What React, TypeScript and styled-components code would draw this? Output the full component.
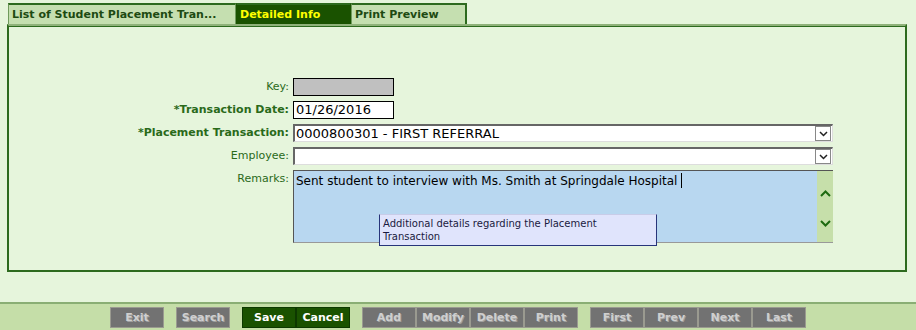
import React from "react";
import styled, { createGlobalStyle } from "styled-components";

const GlobalStyle = createGlobalStyle`
  html, body {
    margin: 0;
    padding: 0;
    background: #e6f5dc;
    font-family: "DejaVu Sans", Verdana, sans-serif;
  }
`;

const Page = styled.div`
  width: 916px;
  height: 330px;
  display: flex;
  flex-direction: column;
  overflow: hidden;
  background: #e6f5dc;
`;

const Tabs = styled.div`
  display: flex;
  padding: 3px 0 0 8px;
`;

const Tab = styled.div<{ $active?: boolean; $width: number }>`
  width: ${(p) => p.$width}px;
  height: 19px;
  box-sizing: content-box;
  border: 1px solid ${(p) => (p.$active ? "#1a5200" : "#6f9a5c")};
  border-top: 2px solid #2d6a1e;
  border-bottom: none;
  background: ${(p) => (p.$active ? "#1a5200" : "#c5dfb0")};
  color: ${(p) => (p.$active ? "#ffff00" : "#1d4a12")};
  font-size: 11px;
  font-weight: bold;
  line-height: 19px;
  padding-left: 3px;
  white-space: nowrap;
  overflow: hidden;
  &:last-child {
    border-right: 2px solid #2d6a1e;
  }
`;

const Panel = styled.div`
  margin: 0 9px 0 7px;
  height: 244px;
  border: 2px solid #2d6a1e;
  border-top: 2px solid #8fb27a;
  box-shadow: inset 0 1px 0 #2d6a1e;
  position: relative;
`;

const Form = styled.div`
  display: grid;
  grid-template-columns: 280px 540px;
  column-gap: 4px;
  row-gap: 5px;
  padding-top: 52px;
  align-items: start;
`;

const Label = styled.div<{ $required?: boolean }>`
  text-align: right;
  font-size: 11px;
  font-weight: ${(p) => (p.$required ? "bold" : "normal")};
  color: #2a6a1a;
  line-height: 18px;
`;

const TextBox = styled.div<{ $disabled?: boolean }>`
  width: 97px;
  height: 16px;
  border: 1px solid #000;
  background: ${(p) => (p.$disabled ? "#c0c0c0" : "#fff")};
  font-size: 13px;
  line-height: 16px;
  padding-left: 2px;
  color: #000;
`;

const Select = styled.div`
  height: 15px;
  border-top: 2px solid #666;
  border-left: 2px solid #666;
  border-right: 1px solid #ddd;
  border-bottom: 1px solid #ddd;
  background: #fff;
  display: flex;
  align-items: center;
  font-size: 13px;
  color: #000;
  padding-left: 1px;
`;

const SelectText = styled.div`
  flex: 1;
  line-height: 15px;
`;

const DropButton = styled.div`
  width: 16px;
  height: 15px;
  box-sizing: border-box;
  border: 1px solid #888;
  background: #fff;
  display: flex;
  align-items: center;
  justify-content: center;
  margin-right: 1px;
`;

const RemarksBox = styled.div`
  height: 71px;
  border-top: 1px solid #555;
  border-left: 1px solid #555;
  border-bottom: 1px solid #999;
  background: #b8d7f0;
  display: flex;
  position: relative;
`;

const RemarksText = styled.div`
  flex: 1;
  font-size: 12px;
  color: #000;
  padding: 2px 0 0 2px;
  line-height: 16px;
`;

const Caret = styled.span`
  display: inline-block;
  width: 1px;
  height: 15px;
  background: #000;
  vertical-align: -3px;
  margin-left: 4px;
`;

const ScrollBar = styled.div`
  width: 16px;
  background: #c6dfaa;
  display: flex;
  flex-direction: column;
  align-items: center;
  justify-content: space-between;
  padding: 19px 0 15px;
`;

const Tooltip = styled.div`
  position: absolute;
  left: 85px;
  top: 43px;
  width: 273px;
  height: 28px;
  padding: 2px 0 0 3px;
  background: #e0e4fc;
  border: 1px solid #27347a;
  border-top: 1px solid #c8cce8;
  font-size: 10px;
  line-height: 13px;
  color: #1a1a40;
`;

const Spacer = styled.div`
  flex: 1;
`;

const Toolbar = styled.div`
  height: 26px;
  border-top: 2px solid #8aae74;
  background: #c5dea8;
  display: flex;
  align-items: center;
  padding-left: 110px;
`;

const Group = styled.div`
  display: flex;
  margin-right: 12px;
`;

const Button = styled.div<{ $primary?: boolean }>`
  width: 54px;
  height: 21px;
  box-sizing: border-box;
  border: 1px solid ${(p) => (p.$primary ? "#0d3800" : "#9a9a90")};
  background: ${(p) => (p.$primary ? "#1a5200" : "#727272")};
  color: ${(p) => (p.$primary ? "#ffffff" : "#cfcfcf")};
  text-shadow: ${(p) => (p.$primary ? "none" : "1px 1px 0 #a0a0a0")};
  font-size: 11px;
  font-weight: bold;
  text-align: center;
  line-height: 19px;
`;

const Chevron = ({ up, color }: { up?: boolean; color: string }) => (
  <svg width="11" height="7" viewBox="0 0 11 7">
    <path
      d={up ? "M1 6 L5.5 1.5 L10 6" : "M1 1 L5.5 5.5 L10 1"}
      fill="none"
      stroke={color}
      strokeWidth="2"
    />
  </svg>
);

const SmallChevron = () => (
  <svg width="9" height="6" viewBox="0 0 9 6">
    <path d="M1 1 L4.5 4.5 L8 1" fill="none" stroke="#222" strokeWidth="1.5" />
  </svg>
);

export default function App() {
  return (
    <Page>
      <GlobalStyle />
      <Tabs>
        <Tab $width={223}>List of Student Placement Tran...</Tab>
        <Tab $width={110} $active>
          Detailed Info
        </Tab>
        <Tab $width={110}>Print Preview</Tab>
      </Tabs>
      <Panel>
        <Form>
          <Label>Key:</Label>
          <TextBox $disabled />
          <Label $required>*Transaction Date:</Label>
          <TextBox>01/26/2016</TextBox>
          <Label $required>*Placement Transaction:</Label>
          <Select>
            <SelectText>0000800301 - FIRST REFERRAL</SelectText>
            <DropButton>
              <SmallChevron />
            </DropButton>
          </Select>
          <Label>Employee:</Label>
          <Select>
            <SelectText />
            <DropButton>
              <SmallChevron />
            </DropButton>
          </Select>
          <Label>Remarks:</Label>
          <RemarksBox>
            <RemarksText>
              Sent student to interview with Ms. Smith at Springdale Hospital
              <Caret />
            </RemarksText>
            <ScrollBar>
              <Chevron up color="#1d6a10" />
              <Chevron color="#1d6a10" />
            </ScrollBar>
            <Tooltip>
              Additional details regarding the Placement
              <br />
              Transaction
            </Tooltip>
          </RemarksBox>
        </Form>
      </Panel>
      <Spacer />
      <Toolbar>
        <Group>
          <Button>Exit</Button>
        </Group>
        <Group>
          <Button>Search</Button>
        </Group>
        <Group>
          <Button $primary>Save</Button>
          <Button $primary>Cancel</Button>
        </Group>
        <Group>
          <Button>Add</Button>
          <Button>Modify</Button>
          <Button>Delete</Button>
          <Button>Print</Button>
        </Group>
        <Group>
          <Button>First</Button>
          <Button>Prev</Button>
          <Button>Next</Button>
          <Button>Last</Button>
        </Group>
      </Toolbar>
    </Page>
  );
}
